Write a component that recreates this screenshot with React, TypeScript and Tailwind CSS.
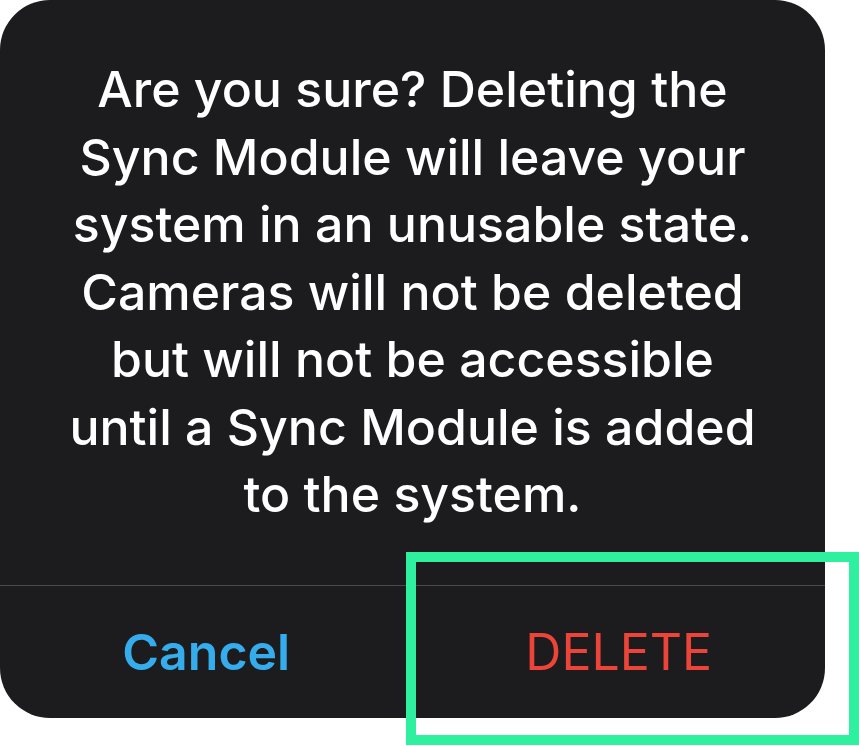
import React from 'react';

const lines = [
    'Are you sure? Deleting the',
    'Sync Module will leave your',
    'system in an unusable state.',
    'Cameras will not be deleted',
    'but will not be accessible',
    'until a Sync Module is added',
    'to the system.',
];

const App: React.FC = () => {
    return (
        <div className="relative w-[859px] h-[746px] bg-white" style={{ fontFamily: 'Inter, "Noto Sans", sans-serif' }}>
            <div className="w-[825px] h-[718px] rounded-[50px] bg-[#1c1c1e] flex flex-col overflow-hidden">
                <div className="h-[585px] flex items-center justify-center px-[30px]">
                    <p className="text-center text-white text-[50px] leading-[67.5px] font-medium whitespace-nowrap">
                        {lines.map((l, i) => (
                            <React.Fragment key={i}>
                                {l}
                                {i < lines.length - 1 && <br />}
                            </React.Fragment>
                        ))}
                    </p>
                </div>
                <div className="h-[1px] bg-[#4a4a4c]" />
                <div className="flex-1 grid grid-cols-2">
                    <button className="flex items-center justify-center text-[#35acec] text-[50px] font-semibold">
                        Cancel
                    </button>
                    <button className="flex items-center justify-center text-[#ed443a] text-[50px] font-normal">
                        DELETE
                    </button>
                </div>
            </div>
            <div className="absolute left-[406px] top-[552px] w-[453px] h-[193px] border-[10px] border-[#2ef09e]" />
        </div>
    );
};

export default App;
